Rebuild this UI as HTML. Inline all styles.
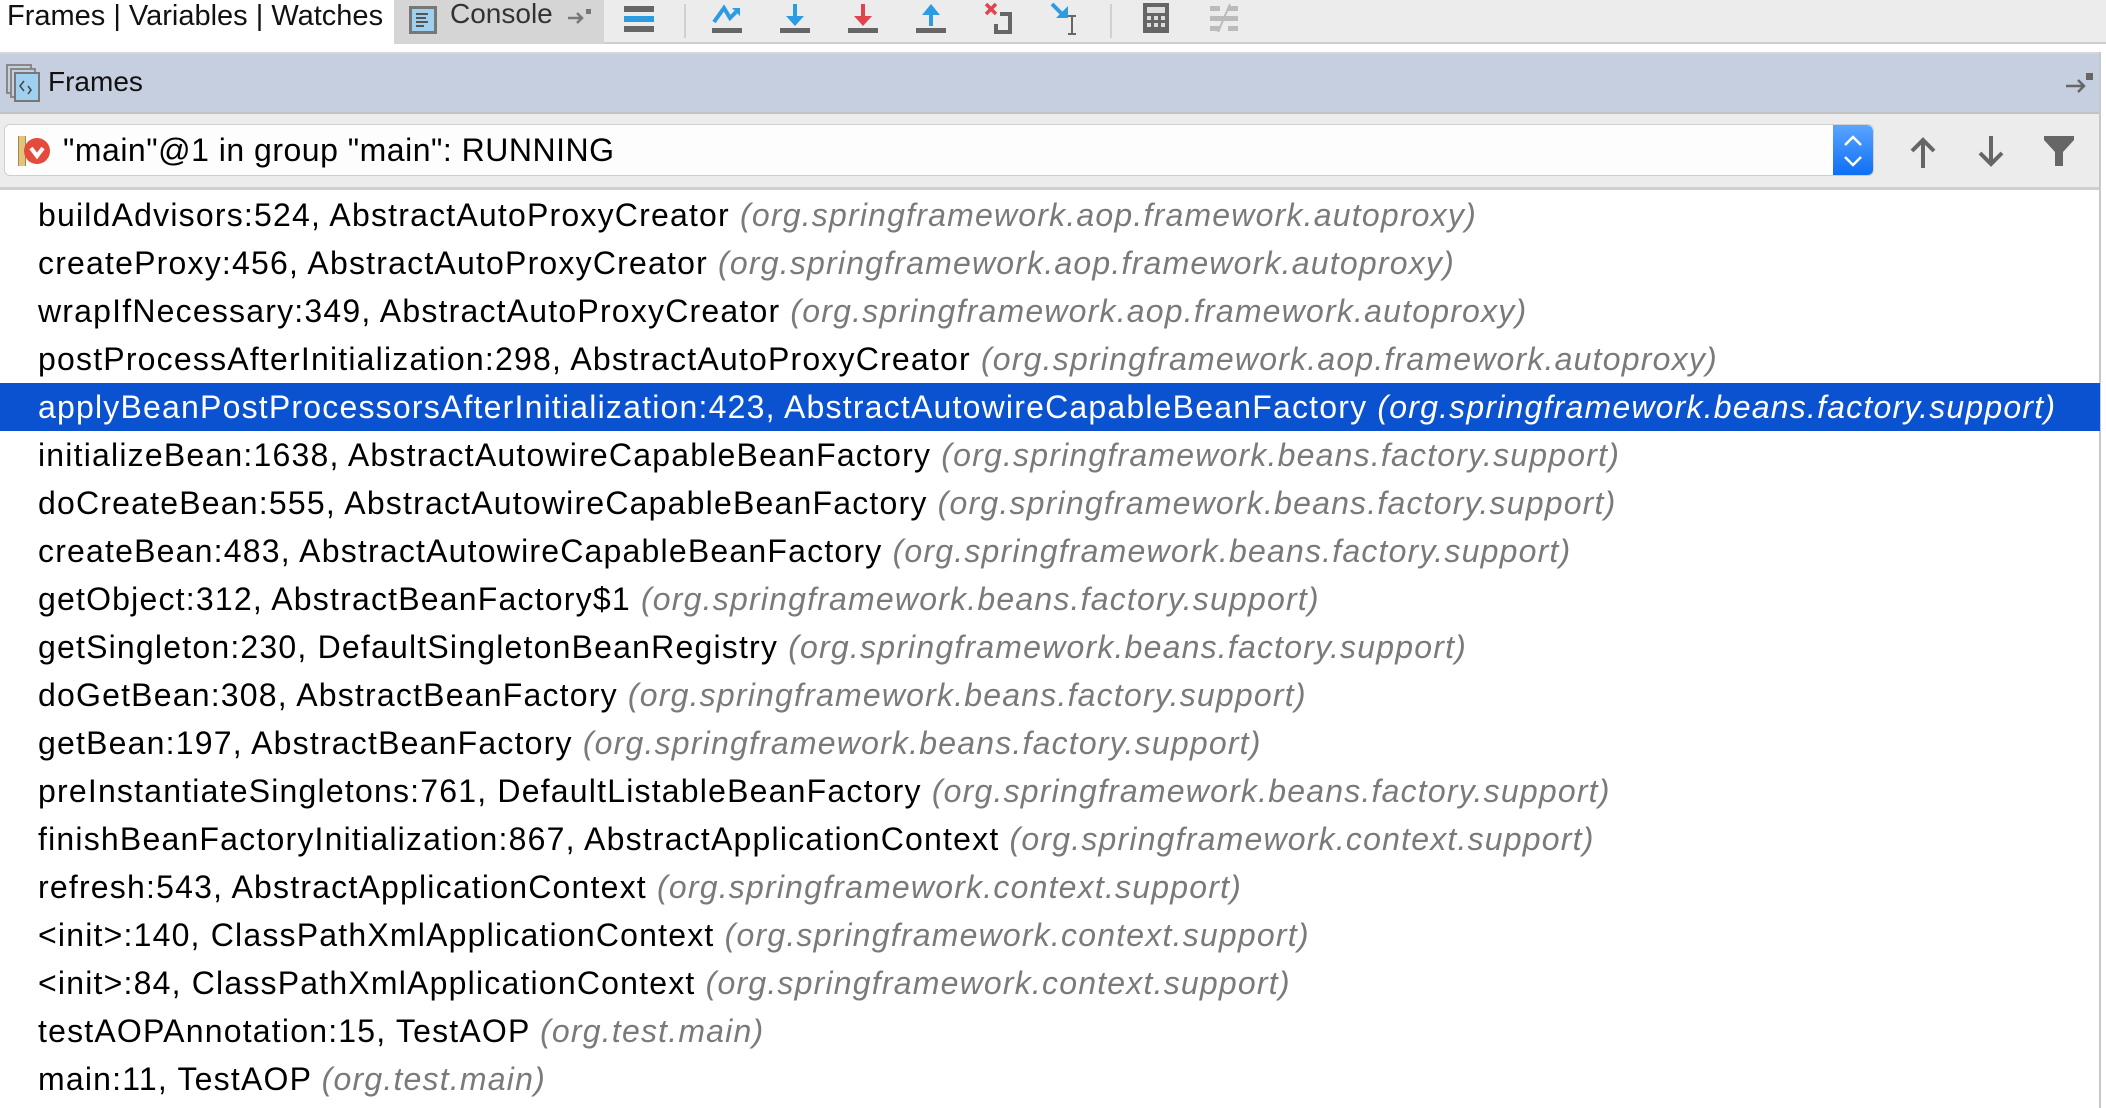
<!DOCTYPE html>
<html><head><meta charset="utf-8">
<style>
*{margin:0;padding:0;box-sizing:border-box}
body{width:2106px;height:1108px;overflow:hidden;background:#fff;font-family:"Liberation Sans",Helvetica,Arial,sans-serif;position:relative}
.abs{position:absolute}
#tb{left:0;top:0;width:2106px;height:44px;background:#ececec;border-bottom:2px solid #cfcfcf}
#tabs{left:0;top:0;width:394px;height:46px;background:#fff;font-size:29px;line-height:32px;padding-left:7px;color:#111;white-space:nowrap}
#console{left:394px;top:0;width:210px;height:44px;background:#d5d5d5;font-size:28px;color:#333}
#hdr{left:0;top:52px;width:2100px;height:62px;background:#c6cfdf;border-top:2px solid #d6d6d6;border-bottom:2px solid #c2c2c2}
#combo{left:0;top:114px;width:2100px;height:76px;background:#ececec;border-bottom:3px solid #cfcfcf}
#box{left:4px;top:10px;width:1870px;height:52px;background:#fdfdfd;border:1px solid #cfcfcf;border-radius:6px;overflow:hidden}
#step{right:0;top:0;width:40px;height:52px;background:linear-gradient(#5aa6ff,#0a6cf5);border-radius:0 6px 6px 0}
.row{position:absolute;left:0;width:2100px;height:48px;font-size:32px;letter-spacing:1.2px;line-height:48px;padding-left:38px;color:#000;white-space:nowrap}
.row i{color:#7a7a7a}
.row.sel{background:#0b52d1;color:#fff}
.row.sel i{color:#fff}
#rb{left:2099px;top:52px;width:2px;height:1056px;background:#c8c8c8}
</style></head><body>
<div id="tb" class="abs"></div>
<div id="tabs" class="abs">Frames | Variables | Watches</div>
<div id="console" class="abs">
 <svg class="abs" style="left:14px;top:5px" width="30" height="30" viewBox="0 0 30 30"><rect x="1" y="1" width="28" height="28" fill="#777"/><rect x="4" y="4" width="22" height="22" fill="#9fd0ef"/><g stroke="#555" stroke-width="2"><line x1="8" y1="9" x2="20" y2="9"/><line x1="8" y1="13" x2="18" y2="13"/><line x1="8" y1="17" x2="20" y2="17"/><line x1="8" y1="21" x2="16" y2="21"/></g></svg>
 <span class="abs" style="left:56px;top:-2px;line-height:32px">Console</span>
 <svg class="abs" style="left:172px;top:6px" width="28" height="22" viewBox="0 0 28 22"><path d="M2 12H16M11 7l5 5-5 5" stroke="#777" stroke-width="2.5" fill="none"/><rect x="20" y="3" width="5" height="5" fill="#777"/></svg>
</div>
<svg class="abs" style="left:622px;top:4px" width="34" height="30"><rect x="2" y="2" width="30" height="6" fill="#666"/><rect x="2" y="12" width="30" height="6" fill="#2d9be0"/><rect x="2" y="22" width="30" height="6" fill="#666"/></svg>
<div class="abs" style="left:684px;top:4px;width:2px;height:34px;background:#d0d0d0"></div>
<svg class="abs" style="left:710px;top:2px" width="34" height="34"><path d="M4 20 L14 6 L20 16 L26 10" stroke="#2d9be0" stroke-width="4" fill="none"/><path d="M22 6h8v8z" fill="#2d9be0"/><rect x="2" y="26" width="30" height="5" fill="#666"/></svg>
<svg class="abs" style="left:778px;top:2px" width="34" height="34"><path d="M17 2v16" stroke="#2d9be0" stroke-width="4"/><path d="M8 14h18l-9 10z" fill="#2d9be0"/><rect x="2" y="26" width="30" height="5" fill="#666"/></svg>
<svg class="abs" style="left:846px;top:2px" width="34" height="34"><path d="M17 2v16" stroke="#e0454d" stroke-width="4"/><path d="M8 14h18l-9 10z" fill="#e0454d"/><rect x="2" y="26" width="30" height="5" fill="#666"/></svg>
<svg class="abs" style="left:914px;top:2px" width="34" height="34"><path d="M17 10v14" stroke="#2d9be0" stroke-width="4"/><path d="M8 13h18l-9-11z" fill="#2d9be0"/><rect x="2" y="26" width="30" height="5" fill="#666"/></svg>
<svg class="abs" style="left:982px;top:2px" width="34" height="34"><path d="M4 2l10 10M14 2L4 12" stroke="#e0454d" stroke-width="3.5"/><path d="M18 12h10v18H14v-8" stroke="#666" stroke-width="4" fill="none"/></svg>
<svg class="abs" style="left:1050px;top:2px" width="34" height="34"><path d="M2 2l12 12" stroke="#2d9be0" stroke-width="4"/><path d="M6 16h12V4z" fill="#2d9be0"/><path d="M22 14v18M18 14h8M18 32h8" stroke="#666" stroke-width="2"/></svg>
<div class="abs" style="left:1110px;top:4px;width:2px;height:34px;background:#d0d0d0"></div>
<svg class="abs" style="left:1141px;top:2px" width="30" height="32"><rect x="2" y="1" width="26" height="30" fill="#666"/><rect x="6" y="5" width="18" height="6" fill="#ddd"/><g fill="#ddd"><rect x="6" y="14" width="4" height="4"/><rect x="13" y="14" width="4" height="4"/><rect x="20" y="14" width="4" height="4"/><rect x="6" y="21" width="4" height="4"/><rect x="13" y="21" width="4" height="4"/><rect x="20" y="21" width="4" height="4"/></g></svg>
<svg class="abs" style="left:1208px;top:2px" width="32" height="32"><g fill="#bbb"><rect x="2" y="4" width="10" height="5"/><rect x="20" y="4" width="10" height="5"/><rect x="2" y="14" width="28" height="5"/><rect x="2" y="24" width="10" height="5"/><rect x="20" y="24" width="10" height="5"/></g><path d="M22 2L10 30" stroke="#bbb" stroke-width="2"/></svg>

<div id="hdr" class="abs">
 <svg class="abs" style="left:6px;top:10px" width="34" height="38" viewBox="0 0 34 38"><rect x="1" y="1" width="24" height="28" fill="none" stroke="#888" stroke-width="2"/><rect x="5" y="5" width="24" height="28" fill="#c6cfdf" stroke="#888" stroke-width="2"/><rect x="9" y="9" width="24" height="28" fill="#9fd0ef" stroke="#777" stroke-width="2"/><path d="M18 17l-4 5 4 5M22 22l3 4-3 4" stroke="#444" stroke-width="1.5" fill="none"/></svg>
 <span class="abs" style="left:48px;top:12px;font-size:28px;line-height:32px;color:#111">Frames</span>
 <svg class="abs" style="left:2064px;top:16px" width="32" height="26"><path d="M2 16H20M14 10l6 6-6 6" stroke="#666" stroke-width="2.5" fill="none"/><rect x="22" y="3" width="7" height="7" fill="#666"/></svg>
</div>
<div id="combo" class="abs">
 <div id="box" class="abs">
  <svg class="abs" style="left:12px;top:9px" width="36" height="34" viewBox="0 0 36 34"><rect x="1" y="2" width="8" height="30" fill="#a6884a"/><rect x="2" y="2" width="6" height="30" fill="#e3c27a"/><circle cx="20" cy="17" r="13" fill="#e54b3c"/><path d="M14 14l6 8 6-8" stroke="#fff" stroke-width="4" fill="none"/></svg>
  <span class="abs" style="left:58px;top:8px;font-size:32px;letter-spacing:0.5px;line-height:34px;color:#000">"main"@1 in group "main": RUNNING</span>
  <div id="step" class="abs"><svg width="40" height="52"><path d="M12 20l8-8 8 8M12 32l8 8 8-8" stroke="#fff" stroke-width="2.5" fill="none"/></svg></div>
 </div>
 <svg class="abs" style="left:1908px;top:20px" width="30" height="36"><path d="M15 6v28" stroke="#666" stroke-width="4"/><path d="M4 17L15 6l11 11" stroke="#666" stroke-width="4" fill="none"/></svg>
 <svg class="abs" style="left:1976px;top:20px" width="30" height="36"><path d="M15 2v28" stroke="#666" stroke-width="4"/><path d="M4 19l11 11 11-11" stroke="#666" stroke-width="4" fill="none"/></svg>
 <svg class="abs" style="left:2042px;top:20px" width="34" height="34"><path d="M2 2h30v4L21 18v14h-8V18L2 6z" fill="#666"/></svg>
</div>
<div id="rb" class="abs"></div>

<div class="row" style="top:191px">buildAdvisors:524, AbstractAutoProxyCreator <i>(org.springframework.aop.framework.autoproxy)</i></div>
<div class="row" style="top:239px">createProxy:456, AbstractAutoProxyCreator <i>(org.springframework.aop.framework.autoproxy)</i></div>
<div class="row" style="top:287px">wrapIfNecessary:349, AbstractAutoProxyCreator <i>(org.springframework.aop.framework.autoproxy)</i></div>
<div class="row" style="top:335px">postProcessAfterInitialization:298, AbstractAutoProxyCreator <i>(org.springframework.aop.framework.autoproxy)</i></div>
<div class="row sel" style="top:383px">applyBeanPostProcessorsAfterInitialization:423, AbstractAutowireCapableBeanFactory <i>(org.springframework.beans.factory.support)</i></div>
<div class="row" style="top:431px">initializeBean:1638, AbstractAutowireCapableBeanFactory <i>(org.springframework.beans.factory.support)</i></div>
<div class="row" style="top:479px">doCreateBean:555, AbstractAutowireCapableBeanFactory <i>(org.springframework.beans.factory.support)</i></div>
<div class="row" style="top:527px">createBean:483, AbstractAutowireCapableBeanFactory <i>(org.springframework.beans.factory.support)</i></div>
<div class="row" style="top:575px">getObject:312, AbstractBeanFactory$1 <i>(org.springframework.beans.factory.support)</i></div>
<div class="row" style="top:623px">getSingleton:230, DefaultSingletonBeanRegistry <i>(org.springframework.beans.factory.support)</i></div>
<div class="row" style="top:671px">doGetBean:308, AbstractBeanFactory <i>(org.springframework.beans.factory.support)</i></div>
<div class="row" style="top:719px">getBean:197, AbstractBeanFactory <i>(org.springframework.beans.factory.support)</i></div>
<div class="row" style="top:767px">preInstantiateSingletons:761, DefaultListableBeanFactory <i>(org.springframework.beans.factory.support)</i></div>
<div class="row" style="top:815px">finishBeanFactoryInitialization:867, AbstractApplicationContext <i>(org.springframework.context.support)</i></div>
<div class="row" style="top:863px">refresh:543, AbstractApplicationContext <i>(org.springframework.context.support)</i></div>
<div class="row" style="top:911px">&lt;init&gt;:140, ClassPathXmlApplicationContext <i>(org.springframework.context.support)</i></div>
<div class="row" style="top:959px">&lt;init&gt;:84, ClassPathXmlApplicationContext <i>(org.springframework.context.support)</i></div>
<div class="row" style="top:1007px">testAOPAnnotation:15, TestAOP <i>(org.test.main)</i></div>
<div class="row" style="top:1055px">main:11, TestAOP <i>(org.test.main)</i></div>
</body></html>
